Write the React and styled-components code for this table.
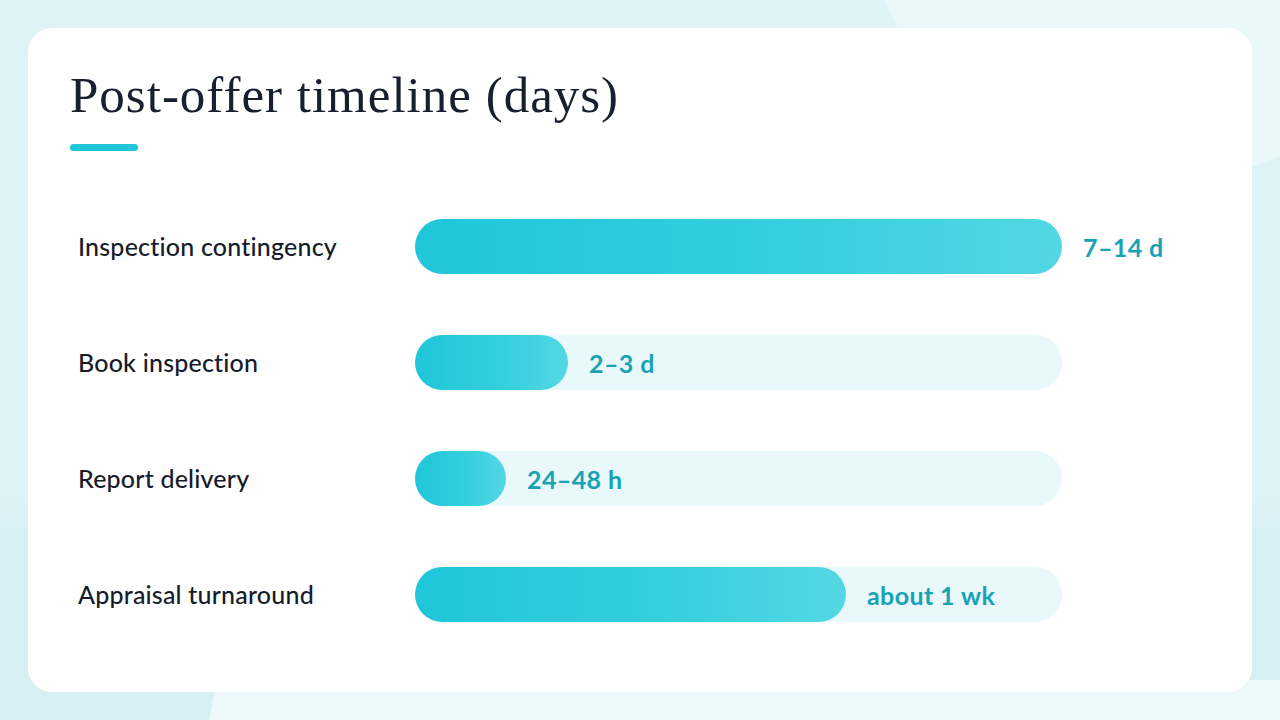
import React from "react";
import styled, { createGlobalStyle } from "styled-components";

const GlobalStyle = createGlobalStyle`
  html, body {
    margin: 0;
    padding: 0;
  }
  body {
    font-family: Lato, "Noto Sans", sans-serif;
  }
`;

const Page = styled.div`
  position: relative;
  width: 1280px;
  height: 720px;
  box-sizing: border-box;
  padding: 28px;
  overflow: hidden;
  background:
    radial-gradient(circle at 1160px -120px, #eaf8fa 0, #eaf8fa 300px, transparent 302px),
    linear-gradient(100deg, transparent 0, transparent 212px, #ecf8fa 214px),
    linear-gradient(180deg, #ddf3f6 0, #ddf3f6 500px, #d6f0f4 540px),
    #daf2f6;
  background-size: 100% 100%, 100% 40px, 100% 100%, 100% 100%;
  background-position: 0 0, 0 bottom, 0 0, 0 0;
  background-repeat: no-repeat;
`;

const Card = styled.section`
  height: 664px;
  box-sizing: border-box;
  background: #ffffff;
  border-radius: 24px;
  padding: 38px 42px 0;
  display: flex;
  flex-direction: column;
`;

const Title = styled.h1`
  margin: 0;
  font-family: "Liberation Serif", "DejaVu Serif", serif;
  font-weight: 400;
  font-size: 51px;
  letter-spacing: 1px;
  line-height: 58px;
  color: #18202f;
`;

const Accent = styled.div`
  width: 68px;
  height: 7px;
  margin-top: 20px;
  border-radius: 4px;
  background: #1fc6d9;
`;

const Rows = styled.div`
  margin-top: 68px;
  display: flex;
  flex-direction: column;
  gap: 61px;
`;

const Row = styled.div`
  display: grid;
  grid-template-columns: 337px 647px;
  align-items: center;
  padding-left: 8px;
  height: 55px;
`;

const Label = styled.div`
  font-size: 25px;
  font-weight: 500;
  letter-spacing: 0.2px;
  line-height: 1;
  color: #161c2b;
`;

const Track = styled.div`
  height: 55px;
  border-radius: 28px;
  background: ${(props) => (props.full ? "transparent" : "#e9f8fa")};
  display: flex;
  align-items: center;
`;

const Fill = styled.div`
  height: 100%;
  flex-shrink: 0;
  border-radius: 28px;
  background: linear-gradient(90deg, #1fc6d9 0%, #34cedd 55%, #53d7e3 100%);
`;

const Value = styled.span`
  margin-left: 21px;
  flex-shrink: 0;
  white-space: nowrap;
  font-size: 25px;
  font-weight: 700;
  letter-spacing: 0.4px;
  color: #17a3b4;
`;

const rows = [
  { label: "Inspection contingency", value: "7–14 d", width: 647 },
  { label: "Book inspection", value: "2–3 d", width: 153 },
  { label: "Report delivery", value: "24–48 h", width: 91 },
  { label: "Appraisal turnaround", value: "about 1 wk", width: 431 },
];

export default function App() {
  return (
    <>
      <GlobalStyle />
      <Page>
        <Card>
          <Title>Post-offer timeline (days)</Title>
          <Accent />
          <Rows>
            {rows.map((r) => (
              <Row key={r.label}>
                <Label>{r.label}</Label>
                <Track full={r.width >= 647}>
                  <Fill style={{ width: r.width }} />
                  <Value>{r.value}</Value>
                </Track>
              </Row>
            ))}
          </Rows>
        </Card>
      </Page>
    </>
  );
}
